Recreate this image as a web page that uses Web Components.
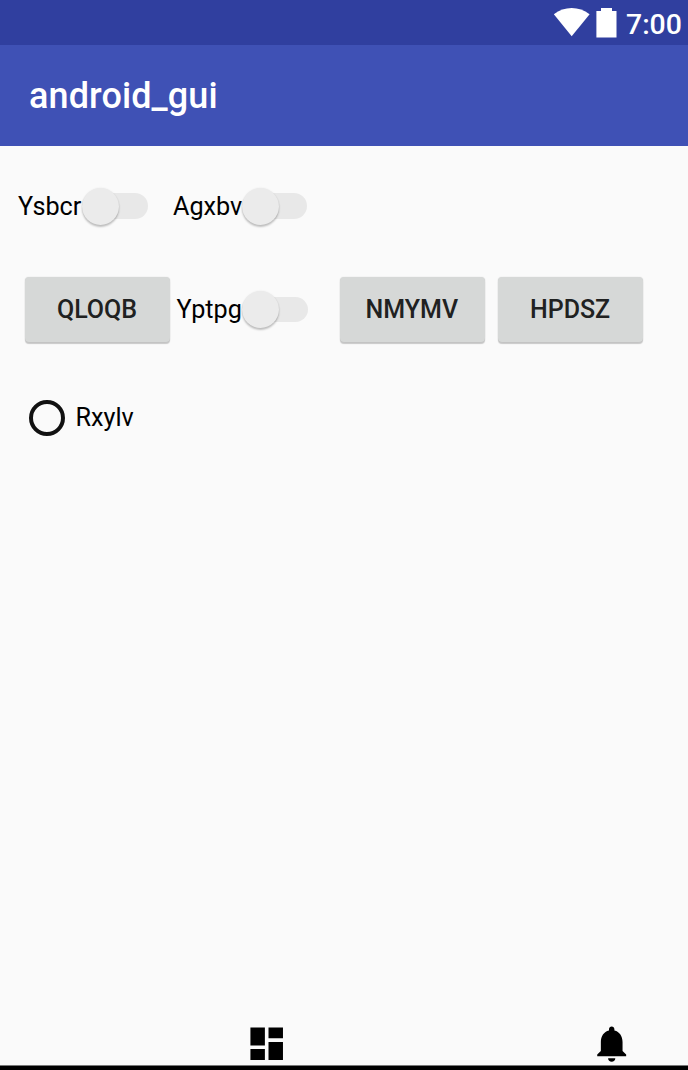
<!DOCTYPE html>
<html lang="en">
<head>
<meta charset="utf-8">
<title>android_gui</title>
<style>
html,body{margin:0;height:100%;background:#fafafa}
body{font-family:Roboto,"Liberation Sans",sans-serif;color:#000}
</style>
</head>
<body>
<gui-screen></gui-screen>
<script>
const define = (name, html) => customElements.define(name, class extends HTMLElement {
  constructor() {
    super();
    const t = document.createElement('template');
    t.innerHTML = html;
    this.attachShadow({mode: 'open'}).append(t.content.cloneNode(true));
  }
});

define('status-bar', `<style>
:host{display:flex;box-sizing:border-box;height:45px;background:#303f9f;color:#fff;justify-content:flex-end;padding-right:6px;font-size:28.4px;font-weight:500;line-height:49px}
svg{display:block;flex:none}
span{width:56px;margin-left:9px;white-space:nowrap}
</style>
<svg width="64" height="45" viewBox="0 0 64 45"><path fill="#fff" d="M.8 14.2Q9 8 18.7 8T36.6 14.2L18.7 36.2z"/><path fill="#fff" d="M43.4 11H48V8h11v3h4.5v26.5H43.4z"/></svg><span><slot></slot></span>`);

define('app-bar', `<style>
:host{display:flex;height:101px;background:#3f51b5;color:#fff;align-items:center;padding-left:29px;font-size:36px;font-weight:500;line-height:42px;letter-spacing:.1px}
</style><span><slot></slot></span>`);

define('toggle-switch', `<style>
:host{display:flex;align-items:center;height:40px;font-size:25.2px;line-height:30px;white-space:nowrap}
.label{flex:none;width:var(--label,64px);padding-top:var(--drop,1px)}
.track{flex:none;width:65.5px;height:25.5px;border-radius:13px;background:#e8e8e8;display:flex;align-items:center}
.thumb{flex:none;width:37px;height:37px;border-radius:50%;background:#ebebeb;box-shadow:0 2px 2px rgba(0,0,0,.23),0 0 2px rgba(0,0,0,.08)}
</style><span class="label"><slot></slot></span><span class="track"><span class="thumb"></span></span>`);

define('raised-button', `<style>
:host{display:block;width:145px;height:65px}
button{display:block;width:100%;height:100%;padding:0 1px 0 0;border:0;border-radius:4px;background:#d6d8d7;color:#202121;font:500 25px/30px Roboto,"Liberation Sans",sans-serif;box-shadow:0 1.5px 1px rgba(0,0,0,.2),0 0 1.5px rgba(0,0,0,.12)}
</style><button><slot></slot></button>`);

define('radio-option', `<style>
:host{display:flex;align-items:center;height:37px;gap:10.5px;font-size:25.2px;line-height:30px}
i{box-sizing:border-box;width:36.5px;height:36.5px;border:4px solid #111;border-radius:50%}
span{padding-bottom:1px}
</style><i></i><span><slot></slot></span>`);

define('nav-bar', `<style>
:host{display:flex;box-sizing:border-box;height:48.5px;padding-left:244.6px;gap:302.2px;background:linear-gradient(transparent 43.5px,#777 43.5px,#777 44.5px,#000 44.5px)}
svg{display:block;flex:none;width:43.4px;height:43.4px}
</style>
<svg viewBox="0 0 24 24"><path d="M3 13h8V3H3v10zm0 8h8v-6H3v6zm10 0h8V11h-8v10zm0-18v6h8V3h-8z"/></svg>
<svg viewBox="0 0 24 24"><path d="M12 22c1.1 0 2-.9 2-2h-4c0 1.1.89 2 2 2zm6-6v-5c0-3.07-1.64-5.64-4.5-6.32V4c0-.83-.67-1.5-1.5-1.5s-1.5.67-1.5 1.5v.68C7.63 5.36 6 7.92 6 11v5l-2 2v1h16v-1l-2-2z"/></svg>`);

define('gui-screen', `<style>
:host{display:flex;flex-direction:column;height:1070px;width:688px;overflow:hidden;background:#fafafa}
status-bar,app-bar{flex:none}
main{flex:1;padding-top:40px}
.row{display:flex;align-items:center}
.first{padding-left:18px;gap:25.5px}
.second{padding-left:25px;margin-top:51px}
.third{padding-left:28.5px;margin-top:57.5px}
</style>
<status-bar>7:00</status-bar>
<app-bar>android_gui</app-bar>
<main>
<div class="row first"><toggle-switch>Ysbcr</toggle-switch><toggle-switch style="--label:68.5px">Agxbv</toggle-switch></div>
<div class="row second"><raised-button>QLOQB</raised-button><toggle-switch style="--label:65.5px;--drop:0px;margin-left:6.5px">Yptpg</toggle-switch><raised-button style="margin-left:32.3px">NMYMV</raised-button><raised-button style="margin-left:13.3px">HPDSZ</raised-button></div>
<div class="row third"><radio-option>Rxylv</radio-option></div>
</main>
<nav-bar></nav-bar>`);
</script>
</body>
</html>
